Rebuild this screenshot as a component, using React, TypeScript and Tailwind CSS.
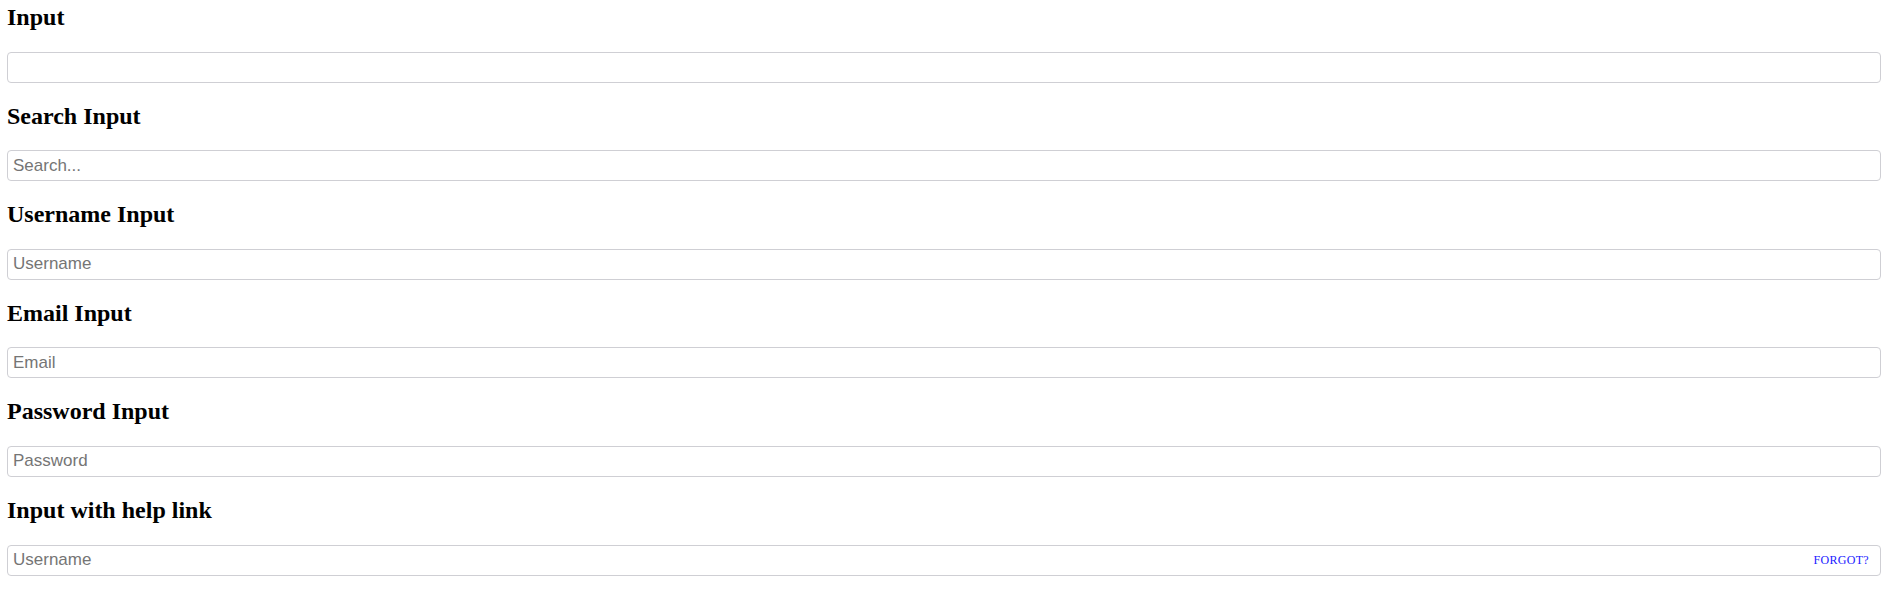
const inputClass =
  "block w-full h-[31px] rounded-[4px] border border-[#cfcfd4] bg-white px-[5px] font-['Liberation_Sans',Arial,sans-serif] text-[17px] text-black placeholder:text-[#757575] outline-none";

const Section = ({
  title,
  children,
}: {
  title: string;
  children: React.ReactNode;
}) => (
  <div className="mb-[20px]">
    <h2 className="mb-[20px] text-[24px] font-bold leading-[27.6px] text-black">
      {title}
    </h2>
    {children}
  </div>
);

export default function App() {
  return (
    <div className="min-h-[590px] bg-white pt-[4px] pl-[7px] pr-[16px] font-['Liberation_Serif','Times_New_Roman',serif]">
      <Section title="Input">
        <input type="text" className={inputClass} />
      </Section>
      <Section title="Search Input">
        <input type="search" placeholder="Search..." className={inputClass} />
      </Section>
      <Section title="Username Input">
        <input type="text" placeholder="Username" className={inputClass} />
      </Section>
      <Section title="Email Input">
        <input type="email" placeholder="Email" className={inputClass} />
      </Section>
      <Section title="Password Input">
        <input type="password" placeholder="Password" className={inputClass} />
      </Section>
      <Section title="Input with help link">
        <div className="relative">
          <input type="text" placeholder="Username" className={inputClass} />
          <a
            href="#"
            className="absolute right-[12px] top-1/2 -translate-y-1/2 text-[12px] tracking-[0.3px] text-[#1a1aff]"
          >
            FORGOT?
          </a>
        </div>
      </Section>
    </div>
  );
}
